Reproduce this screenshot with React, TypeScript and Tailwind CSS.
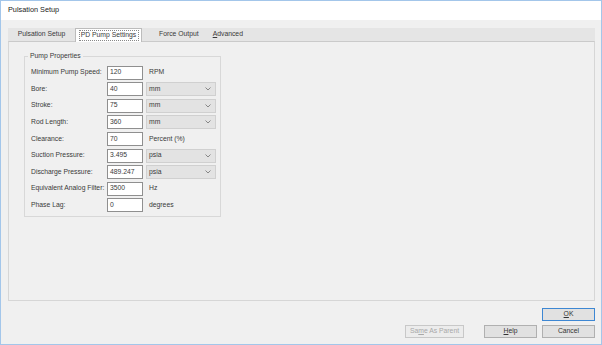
import React from "react";

const rows: { label: string; value: string; unit: string; dropdown: boolean }[] = [
  { label: "Minimum Pump Speed:", value: "120", unit: "RPM", dropdown: false },
  { label: "Bore:", value: "40", unit: "mm", dropdown: true },
  { label: "Stroke:", value: "75", unit: "mm", dropdown: true },
  { label: "Rod Length:", value: "360", unit: "mm", dropdown: true },
  { label: "Clearance:", value: "70", unit: "Percent (%)", dropdown: false },
  { label: "Suction Pressure:", value: "3.495", unit: "psia", dropdown: true },
  { label: "Discharge Pressure:", value: "489.247", unit: "psia", dropdown: true },
  { label: "Equivalent Analog Filter:", value: "3500", unit: "Hz", dropdown: false },
  { label: "Phase Lag:", value: "0", unit: "degrees", dropdown: false },
];

function Chevron() {
  return (
    <svg width="6" height="4" viewBox="0 0 6 4" className="block">
      <path d="M0.5 0.5 L3 3 L5.5 0.5" fill="none" stroke="#707070" strokeWidth="0.8" />
    </svg>
  );
}

function Row({ label, value, unit, dropdown }: (typeof rows)[number]) {
  return (
    <div className="h-[16.6px] flex items-center">
      <div className="w-[77px] pl-[1px] leading-none">{label}</div>
      <div className="w-[36px] h-[14px] bg-white border border-[#8f8f8f] flex items-center pl-[2px] leading-none">
        {value}
      </div>
      {dropdown ? (
        <div className="ml-[3px] w-[70px] h-[14px] bg-[#e3e3e3] border border-[#d0d0d0] flex items-center justify-between pl-[2px] pr-[4px] leading-none">
          <span>{unit}</span>
          <Chevron />
        </div>
      ) : (
        <div className="ml-[6px] leading-none">{unit}</div>
      )}
    </div>
  );
}

function Btn({
  children,
  w,
  variant = "normal",
}: {
  children: React.ReactNode;
  w: string;
  variant?: "normal" | "default" | "disabled";
}) {
  const cls =
    variant === "default"
      ? "bg-[#e1e1e1] border-[#3d87d3] text-[#333]"
      : variant === "disabled"
      ? "bg-[#ececec] border-[#c8c8c8] text-[#a8a8a8]"
      : "bg-[#e1e1e1] border-[#b0b0b0] text-[#333]";
  return (
    <div className={`${w} h-[13px] border flex items-center justify-center leading-none ${cls}`}>
      {children}
    </div>
  );
}

export default function App() {
  return (
    <div
      className="w-[602px] h-[345px] border border-[#a3c6ea] bg-[#f0f0f0] flex flex-col text-[#3a3a3a] overflow-hidden"
      style={{ fontFamily: '"Liberation Sans", Arial, sans-serif' }}
    >
      {/* Title bar */}
      <div className="h-[19px] bg-white flex items-center pl-[7px] text-[7.3px] text-[#222]">
        Pulsation Setup
      </div>

      <div className="flex-1 flex flex-col pl-[7px] pr-[6px] pt-[8px] text-[6.8px]">
        {/* Tab strip */}
        <div className="h-[13px] bg-[#e5e5e5] flex items-end relative z-10">
          <div className="w-[67px] h-[13px] flex items-center justify-center">Pulsation Setup</div>
          <div className="relative w-[67px] h-[14px] -mb-[1px] bg-white border-l border-t border-r border-[#bcbcbc] flex items-center justify-center">
            <span className="leading-none">PD Pump Settings</span>
            <div className="absolute left-[3px] right-[2px] top-[1px] bottom-[1px] border border-dotted border-[#888]" />
          </div>
          <div className="ml-[17px] h-[13px] flex items-center">Force Output</div>
          <div className="ml-[14px] h-[13px] flex items-center">
            <span>
              <span className="underline">A</span>dvanced
            </span>
          </div>
        </div>

        {/* Tab panel */}
        <div className="h-[260px] border border-[#d6d6d6] border-t-[#cacaca] pl-[15px] pt-[14px]">
          <div className="relative w-[197px] h-[161px] border border-[#d8d8d8] pl-[5px] pt-[7.4px]">
            <div className="absolute left-[3px] top-[-5px] bg-[#f0f0f0] px-[2px] leading-none h-[9px] flex items-center">
              Pump Properties
            </div>
            {rows.map((r) => (
              <Row key={r.label} {...r} />
            ))}
          </div>
        </div>

        {/* Buttons */}
        <div className="mt-[7px] flex flex-col items-end gap-[4px]">
          <Btn w="w-[53px]" variant="default">
            <span>
              <span className="underline">O</span>K
            </span>
          </Btn>
          <div className="flex gap-[5px]">
            <div className="mr-[15px]">
              <Btn w="w-[59px]" variant="disabled">
                <span>
                  Sa<span className="underline">m</span>e As Parent
                </span>
              </Btn>
            </div>
            <Btn w="w-[53px]">
              <span>
                <span className="underline">H</span>elp
              </span>
            </Btn>
            <Btn w="w-[53px]">Cancel</Btn>
          </div>
        </div>
      </div>
    </div>
  );
}
